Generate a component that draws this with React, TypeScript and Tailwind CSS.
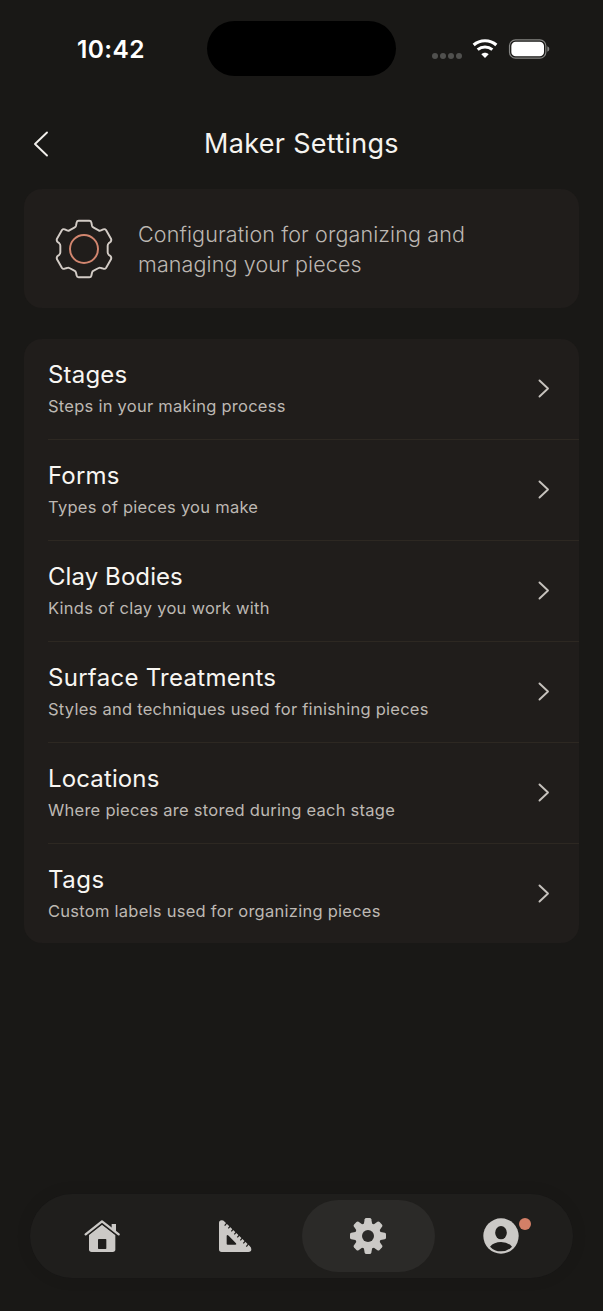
import React from "react";

const rows = [
  { title: "Stages", detail: "Steps in your making process", tracking: "tracking-[0.2px]" },
  { title: "Forms", detail: "Types of pieces you make", tracking: "tracking-[0.15px]" },
  { title: "Clay Bodies", detail: "Kinds of clay you work with", tracking: "tracking-[0.08px]" },
  { title: "Surface Treatments", detail: "Styles and techniques used for finishing pieces", tracking: "tracking-[0.28px]" },
  { title: "Locations", detail: "Where pieces are stored during each stage", tracking: "tracking-[0.13px]" },
  { title: "Tags", detail: "Custom labels used for organizing pieces", tracking: "tracking-[0.5px]" },
];

function StatusBar() {
  return (
    <header className="flex h-[97px] items-start text-white">
      <div className="mt-[33px] ml-[77px] w-[130px] whitespace-nowrap text-[24.5px] leading-[33px] font-semibold tracking-[0.4px]">10:42</div>
      <div className="mt-[21px] h-[55px] w-[189px] rounded-full bg-black" />
      <div className="mt-[38px] ml-9 flex items-start">
        <div className="mt-[14.5px] flex gap-[2px]">
          {[0, 1, 2, 3].map((i) => (
            <span key={i} className="size-[6px] rounded-full bg-[#50504e]" />
          ))}
        </div>
        <svg className="ml-[10px]" width="26" height="22" viewBox="0 0 78 66" fill="none" stroke="#fff">
          <path d="M5 21C24 4 54 4 73 21" strokeWidth="9.5" />
          <path d="M17 35C30 24 48 24 61 35" strokeWidth="9" />
          <path d="M39 60L28 49C34 43 44 43 50 49Z" fill="#fff" stroke="none" />
        </svg>
        <svg className="ml-[10px]" width="42" height="22" viewBox="0 0 126 66" fill="none">
          <rect x="4.5" y="5.5" width="109" height="55" rx="18" stroke="#858583" strokeWidth="3.5" />
          <rect x="10" y="11" width="98" height="44" rx="13" fill="#fff" />
          <path d="M118 25Q124 27 124 33T118 41Z" fill="#858583" />
        </svg>
      </div>
    </header>
  );
}

function OutlineGear() {
  return (
    <svg width="60" height="60" viewBox="0 0 180 180" fill="none" strokeWidth="5.8" strokeLinejoin="round">
      <path
        stroke="#d3ccc6"
        d="M74 5H106Q111 5 112 10L114 20Q115 24 119 26L134 34Q137 36 141 34L148 31Q153 29 156 33L171 59Q173 64 170 68L164 73Q161 76 161 80V100Q161 104 164 107L170 112Q173 116 171 121L156 147Q153 151 148 149L141 147Q137 145 134 147L119 155Q115 157 114 161L112 170Q111 175 106 175H74Q69 175 68 170L66 161Q65 157 61 155L46 147Q43 145 39 147L32 149Q27 151 24 147L9 121Q7 116 10 112L16 107Q19 104 19 100V80Q19 76 16 73L10 68Q7 64 9 59L24 33Q27 29 32 31L39 34Q43 36 46 34L61 26Q65 24 66 20L68 10Q69 5 74 5Z"
      />
      <circle cx="90" cy="90" r="42" stroke="#d2866f" />
    </svg>
  );
}

function HomeIcon() {
  return (
    <svg width="36" height="36" viewBox="0 0 108 108" fill="#cbc9c6">
      <path d="M15 51L54 20L94 51V94Q94 102 86 102H23Q15 102 15 94Z" />
      <path d="M4 49L54 10L104 49" fill="none" stroke="#1f1e1c" strokeWidth="15" />
      <path d="M83 18H96V43L83 33Z" />
      <path d="M5 49L54 10L104 49" fill="none" stroke="#cbc9c6" strokeWidth="7" strokeLinecap="round" strokeLinejoin="round" />
      <rect x="42" y="63" width="25" height="30" rx="2" fill="#1f1e1c" />
    </svg>
  );
}

function RulerIcon() {
  return (
    <svg width="36" height="36" viewBox="0 0 108 108">
      <path fillRule="evenodd" fill="#cbc9c6" d="M6 15Q6 7 14 7Q19 7 23 11L98 84Q103 88 103 94Q103 102 94 102H14Q6 102 6 94ZM29 55V77Q29 80 32 80H55Q60 80 57 76L35 53Q29 48 29 55Z" />
      <path d="M31 13L23 23M41 23L34 31M50 32L43 40M59 41L52 49M68 50L61 58M77 59L70 67M86 68L79 76M95 77L88 86" stroke="#1f1e1c" strokeWidth="3.7" />
    </svg>
  );
}

function GearIcon() {
  return (
    <svg width="36" height="36" viewBox="0 0 108 108" fill="#cbc9c6">
      <circle cx="54" cy="54" r="39" />
      {[0, 45, 90, 135, 180, 225, 270, 315].map((a) => (
        <path key={a} transform={`rotate(${a} 54 54)`} d="M41 20L44 4Q45 0 49 0H59Q63 0 64 4L67 20Z" />
      ))}
      <circle cx="54" cy="54" r="18" fill="#2b2a28" />
    </svg>
  );
}

function ProfileIcon() {
  return (
    <svg width="36" height="36" viewBox="0 0 108 108">
      <circle cx="54" cy="54" r="53" fill="#cbc9c6" />
      <ellipse cx="54" cy="44" rx="17.5" ry="20" fill="#1f1e1c" />
      <path d="M21 86Q33 72 54 72T87 86Q74 100 54 100T21 86Z" fill="#1f1e1c" />
    </svg>
  );
}

export default function App() {
  return (
    <div className="flex h-[1311px] w-[603px] flex-col overflow-hidden bg-[#191816] font-['Inter',sans-serif]">
      <StatusBar />
      <div className="grid h-[92px] grid-cols-[1fr_auto_1fr] items-center">
        <button aria-label="Back" className="ml-[33px] w-4">
          <svg className="mt-[1px]" width="16" height="26" viewBox="0 0 16 26" fill="none" stroke="#f1efeb" strokeWidth="1.9" strokeLinecap="round" strokeLinejoin="round">
            <path d="M14 1.5L2 13L14 24.5" />
          </svg>
        </button>
        <h1 className="pt-0.5 whitespace-nowrap text-[27px] leading-9 tracking-[0.3px] text-[#f5f3ef]">Maker Settings</h1>
      </div>
      <main className="px-6">
        <section className="flex h-[119px] w-[555px] items-center rounded-[18px] bg-[#201d1b] pl-[30px]">
          <OutlineGear />
          <p className="ml-6 pt-0.5 whitespace-nowrap text-[21.5px] leading-[29.5px] font-[330] tracking-[0.12px] text-[#bcb7b2]">
            Configuration for organizing and
            <br />
            managing your pieces
          </p>
        </section>
        <section className="mt-[31px] h-[604px] w-[555px] overflow-hidden rounded-[18px] bg-[#201d1b] pl-6">
          {rows.map((row) => (
            <div key={row.title} className="flex h-[101px] items-start border-b border-[#2d2822] last:border-b-0">
              <div className="mt-5 flex-1 whitespace-nowrap">
                <h2 className={`text-[24px] leading-8 text-[#f8f6f2] ${row.tracking}`}>{row.title}</h2>
                <p className="mt-px text-[16.5px] leading-7 font-[430] tracking-[0.26px] text-[#bdb8b3]">{row.detail}</p>
              </div>
              <svg className="mt-10 mr-[29px]" width="12" height="19" viewBox="0 0 12 19" fill="none" stroke="#c6c2bd" strokeWidth="1.9" strokeLinecap="round" strokeLinejoin="round">
                <path d="M1.5 1.5L10 9.5L1.5 17.5" />
              </svg>
            </div>
          ))}
        </section>
      </main>
      <nav className="mt-auto mb-[33px] ml-[30px] flex h-[84px] w-[543px] items-center rounded-full bg-[#1f1e1c] px-[5.5px] shadow-[0_0_14px_2px_rgba(0,0,0,0.08)]">
        <button aria-label="Home" className="flex h-[72px] w-[133px] items-center justify-center"><HomeIcon /></button>
        <button aria-label="Tools" className="flex h-[72px] w-[133px] items-center justify-center"><RulerIcon /></button>
        <button aria-label="Settings" className="flex h-[72px] w-[133px] items-center justify-center rounded-full bg-[#2b2a28]"><GearIcon /></button>
        <button aria-label="Profile" className="flex h-[72px] w-[133px] items-center justify-center">
          <span className="relative">
            <ProfileIcon />
            <span className="absolute top-0 left-9 size-3 rounded-full bg-[#d37f67]" />
          </span>
        </button>
      </nav>
    </div>
  );
}
